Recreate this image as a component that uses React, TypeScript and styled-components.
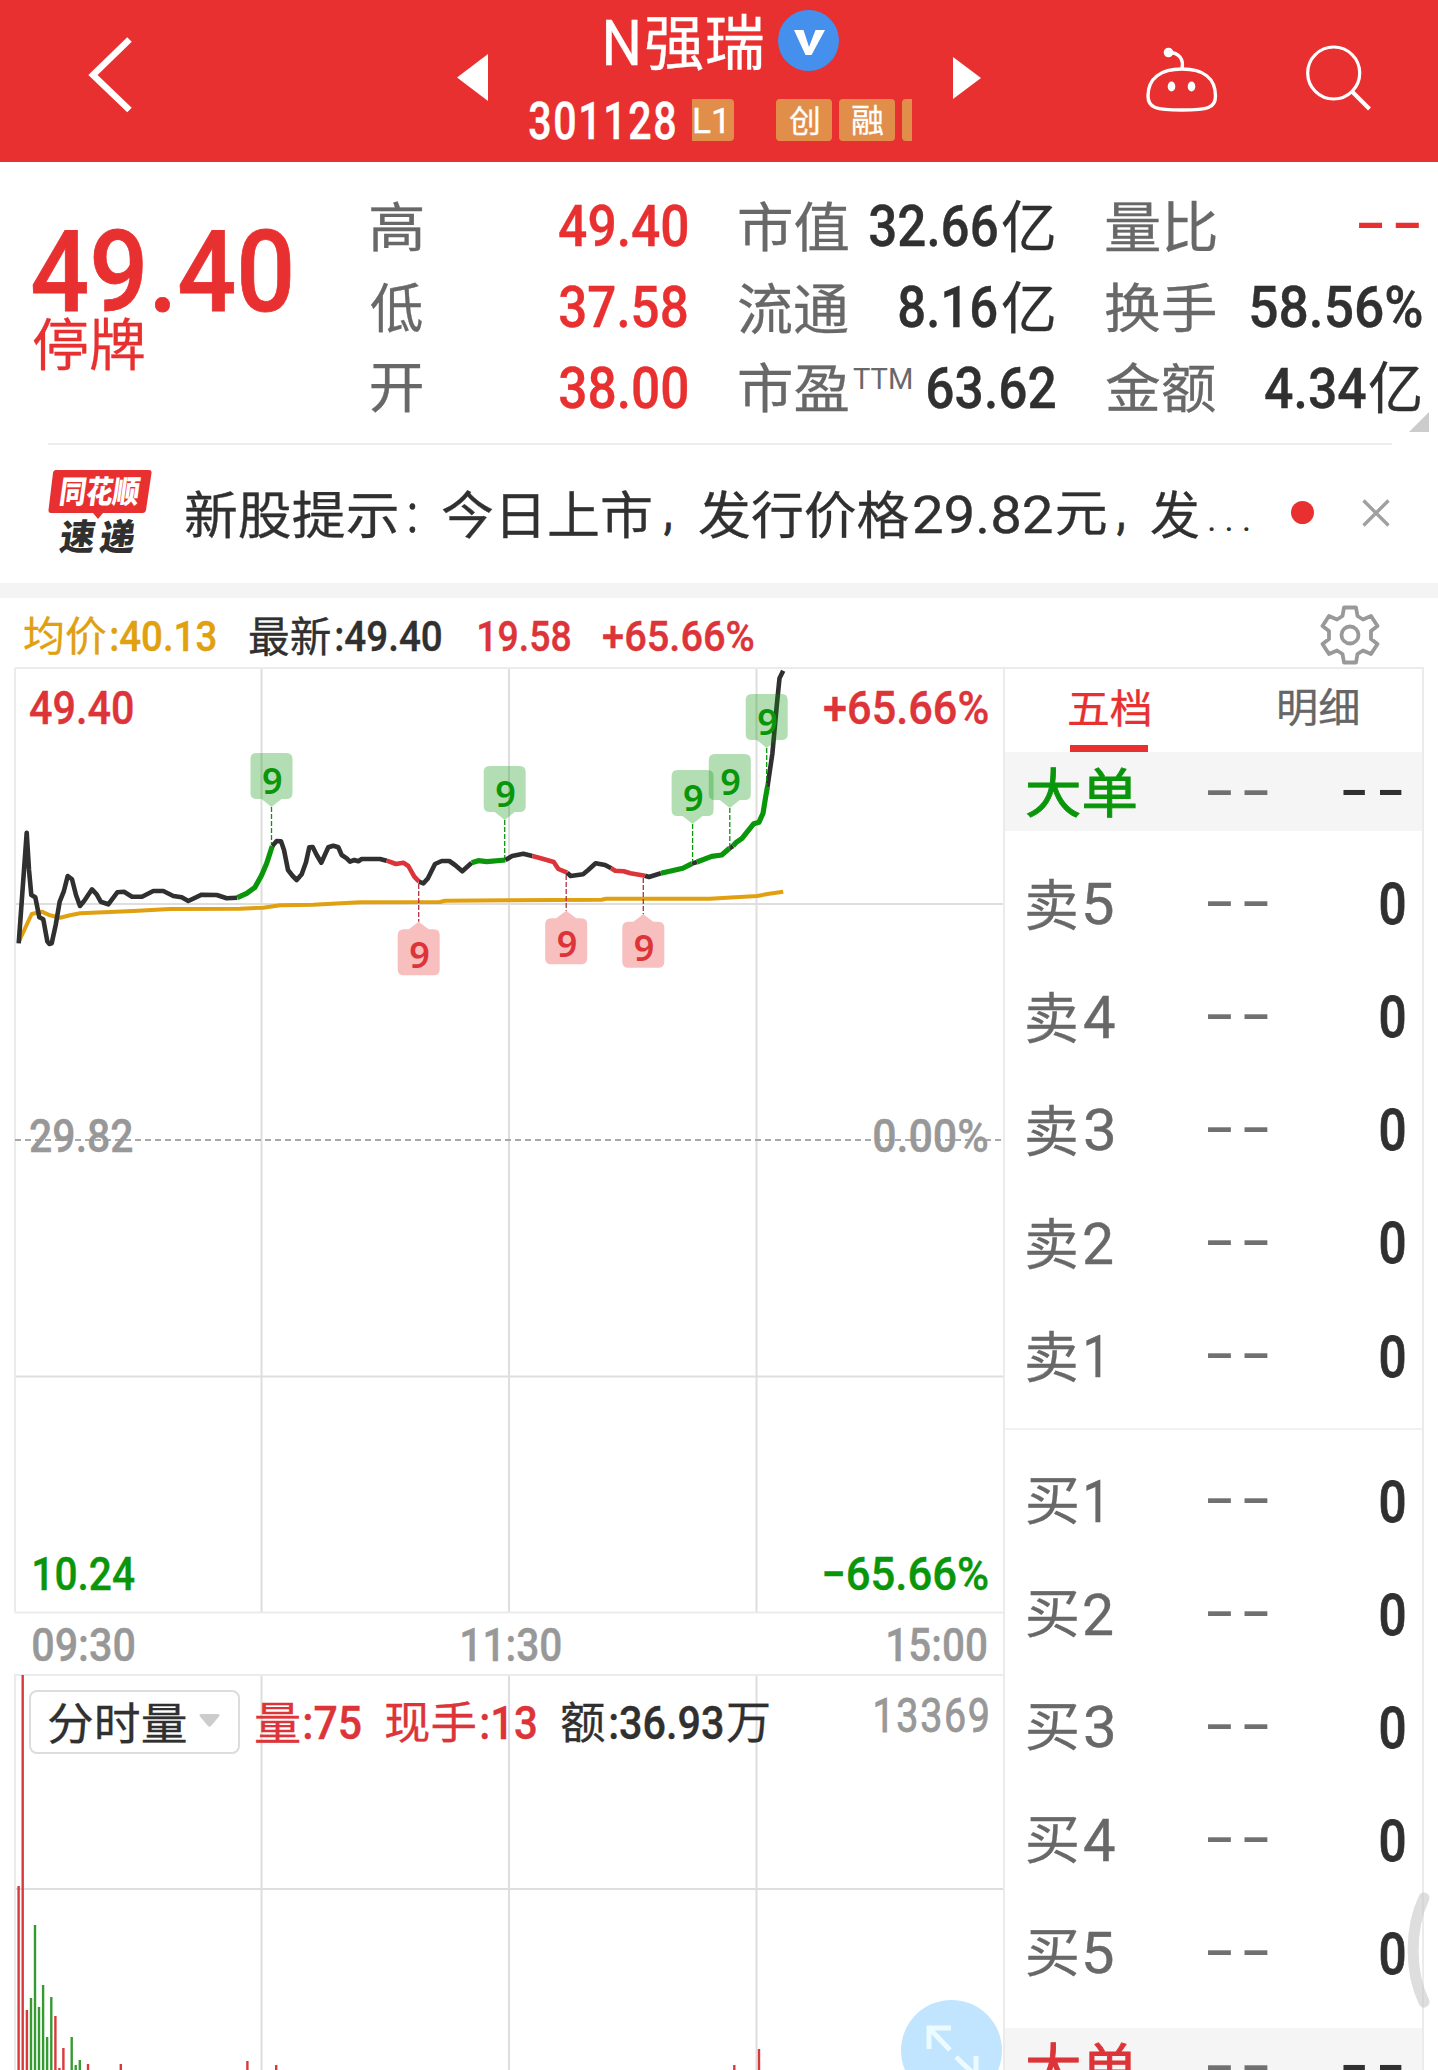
import React, { useMemo } from "react";
import styled, { createGlobalStyle } from "styled-components";

const FONT = 'Roboto, "Noto Sans CJK SC", sans-serif';
const RED = "#e83030";
const CHART_RED = "#dc3438";
const GREEN = "#0a960a";
const DARK = "#303030";
const GRAY = "#686868";
const MUTED = "#989898";
const GOLD = "#e0a010";

const GlobalStyle = createGlobalStyle`
  * { box-sizing: border-box; }
  body { margin: 0; background: #fff; font-family: ${FONT}; }
`;

/* ---------- Text whose glyphs fill an exact w x h box ---------- */

const InkBox = styled.span<{ $w: number; $h: number; $ml: number }>`
  display: block;
  flex: none;
  width: ${(p) => p.$w}px;
  height: ${(p) => p.$h}px;
  margin-left: ${(p) => p.$ml}px;
`;

const InkText = styled.span<{ $size: number; $weight: number; $color?: string; $ls: number; $stroke: number }>`
  display: block;
  width: max-content;
  white-space: pre;
  line-height: ${(p) => p.$size}px;
  font-family: ${FONT};
  font-size: ${(p) => p.$size}px;
  font-weight: ${(p) => p.$weight};
  letter-spacing: ${(p) => p.$ls}px;
  color: ${(p) => p.$color ?? "inherit"};
  -webkit-text-stroke: ${(p) => p.$stroke}px currentColor;
  transform-origin: 0 0;
`;

interface InkProps {
  children: string;
  w: number;
  h: number;
  weight?: number;
  color?: string;
  ls?: number;
  ml?: number;
  dy?: number;
  stroke?: number;
}

let measuring: CanvasRenderingContext2D | null = null;

function fit(text: string, size: number, weight: number, ls: number, w: number, h: number, dy: number) {
  measuring = measuring ?? document.createElement("canvas").getContext("2d")!;
  measuring.font = `${weight} ${size}px ${FONT}`;
  (measuring as unknown as { letterSpacing: string }).letterSpacing = `${ls}px`;
  const m = measuring.measureText(text);
  const sx = w / (m.actualBoundingBoxLeft + m.actualBoundingBoxRight);
  const sy = h / (m.actualBoundingBoxAscent + m.actualBoundingBoxDescent);
  const baseline = (size + Math.round(m.fontBoundingBoxAscent) - Math.round(m.fontBoundingBoxDescent)) / 2;
  const tx = m.actualBoundingBoxLeft * sx;
  const ty = (m.actualBoundingBoxAscent - baseline) * sy + dy;
  return `translate(${tx}px, ${ty}px) scale(${sx}, ${sy})`;
}

function Ink({ children, w, h, weight = 400, color, ls = 0, ml = 0, dy = 0, stroke }: InkProps) {
  const dashes = /^-+$/.test(children);
  const cjk = /[\u4e00-\u9fff]/.test(children);
  const size = dashes ? 58 : Math.round(h * (cjk ? 1.09 : 1.38));
  const spacing = dashes ? 6 : ls;
  const transform = useMemo(
    () => fit(children, size, weight, spacing, w, h, dy),
    [children, size, weight, spacing, w, h, dy]
  );
  return (
    <InkBox $w={w} $h={h} $ml={ml}>
      <InkText
        $size={size}
        $weight={weight}
        $color={color}
        $ls={spacing}
        $stroke={stroke ?? (cjk ? 0.3 : dashes ? 0 : 0.4)}
        style={{ transform }}
      >
        {children}
      </InkText>
    </InkBox>
  );
}

/* ---------- Page ---------- */

const Page = styled.div`
  width: 1438px;
  height: 2070px;
  overflow: hidden;
  background: #fff;
  display: flex;
  flex-direction: column;
  position: relative;
`;

/* ---------- Header ---------- */

const Header = styled.header`
  height: 162px;
  flex: none;
  background: ${RED};
  color: #fff;
  display: flex;
  align-items: flex-start;
`;

const HeaderIcon = styled.svg<{ $w: number; $h: number; $ml: number; $mt: number }>`
  flex: none;
  display: block;
  width: ${(p) => p.$w}px;
  height: ${(p) => p.$h}px;
  margin: ${(p) => p.$mt}px 0 0 ${(p) => p.$ml}px;
  overflow: visible;
`;

const Title = styled.div`
  width: 384px;
  height: 162px;
  margin-left: 41px;
  flex: none;
`;

const TitleRow = styled.div`
  display: flex;
  align-items: center;
  height: 65px;
  margin: 10px 0 0 77px;
`;

const VBadge = styled.svg`
  width: 61px;
  height: 61px;
  margin: -4px 0 0 15px;
  flex: none;
`;

const CodeRow = styled.div`
  display: flex;
  align-items: center;
  height: 42px;
  margin-top: 24px;
`;

const Tag = styled.span<{ $w: number; $ml: number; $radius: string; $pad?: number }>`
  display: flex;
  align-items: center;
  flex: none;
  width: ${(p) => p.$w}px;
  height: 42px;
  margin-left: ${(p) => p.$ml}px;
  padding-left: ${(p) => p.$pad ?? 0}px;
  border-radius: ${(p) => p.$radius};
  background: #e28e4b;
`;

/* ---------- Quote summary ---------- */

const Summary = styled.section`
  height: 282px;
  flex: none;
  display: flex;
  position: relative;
  padding-top: 24px;
`;

const PriceBlock = styled.div`
  width: 258px;
  margin: 42px 0 0 33px;
  display: flex;
  flex-direction: column;
  gap: 4px;
`;

const StatColumn = styled.dl<{ $w: number; $ml: number }>`
  margin: 0 0 0 ${(p) => p.$ml}px;
  width: ${(p) => p.$w}px;
  flex: none;
`;

const StatRow = styled.div`
  display: flex;
  align-items: center;
  justify-content: space-between;
  height: 80.7px;
`;

const StatLabel = styled.dt`
  display: flex;
  padding-top: 1.5px;
  color: ${GRAY};
`;

const StatValue = styled.dd<{ $color: string; $pr?: number }>`
  display: flex;
  align-items: center;
  margin: 0;
  padding-right: ${(p) => p.$pr ?? 0}px;
  color: ${(p) => p.$color};
`;

const Corner = styled.span`
  position: absolute;
  right: 9px;
  bottom: 12px;
  width: 20px;
  height: 20px;
  background: #ccc;
  clip-path: polygon(100% 0, 100% 100%, 0 100%);
`;

/* ---------- News strip ---------- */

const News = styled.section`
  height: 140px;
  flex: none;
  margin: -1px 46px 0 48px;
  padding-bottom: 4px;
  border-top: 2px solid #ededed;
  display: flex;
  align-items: center;
  color: ${DARK};
`;

const NewsLogo = styled.svg`
  width: 104px;
  height: 86px;
  flex: none;
  overflow: visible;
`;

const NewsText = styled.div`
  display: flex;
  align-items: center;
  margin: 5px 0 0 33.5px;
`;

const UnreadDot = styled.span`
  width: 23px;
  height: 23px;
  border-radius: 50%;
  background: ${RED};
  margin-left: 38.5px;
  flex: none;
`;

const CloseIcon = styled.svg`
  width: 28px;
  height: 28px;
  margin: 1px 0 0 48px;
  flex: none;
`;

const Band = styled.div`
  height: 15px;
  flex: none;
  background: #f4f4f4;
`;

/* ---------- Chart info line ---------- */

const InfoBar = styled.div`
  height: 69px;
  flex: none;
  display: flex;
  align-items: center;
  padding: 7px 58px 0 24px;
`;

const GearIcon = styled.svg`
  width: 60px;
  height: 60px;
  margin: -3px 0 0 auto;
  flex: none;
`;

/* ---------- Main area ---------- */

const Main = styled.main`
  display: flex;
  margin-left: 14px;
  height: 1403px;
  flex: none;
`;

const Charts = styled.section`
  width: 989px;
  height: 1403px;
  position: relative;
  flex: none;
`;

const PriceChart = styled.svg`
  display: block;
  width: 990px;
  height: 946px;
  overflow: visible;
`;

const AxisLabel = styled.div<{ $top: number; $left?: number; $right?: number }>`
  position: absolute;
  top: ${(p) => p.$top}px;
  ${(p) => (p.$left !== undefined ? `left: ${p.$left}px;` : `right: ${p.$right}px;`)}
`;

const TimeAxis = styled.div`
  height: 62px;
  display: flex;
  align-items: center;
  justify-content: space-between;
  padding: 2px 17px 0 19px;
  color: ${MUTED};
`;

const VolumeArea = styled.div`
  position: relative;
  height: 395px;
`;

const VolumeChart = styled.svg`
  display: block;
  width: 990px;
  height: 395px;
  overflow: visible;
`;

const VolumeHead = styled.div`
  position: absolute;
  left: 15px;
  top: 15px;
  right: 16px;
  height: 64px;
  display: flex;
  align-items: center;
`;

const IndicatorSelect = styled.div`
  width: 211px;
  height: 64px;
  flex: none;
  border: 2px solid #dcdcdc;
  border-radius: 8px;
  background: #fff;
  display: flex;
  align-items: center;
  padding: 3px 18px 0 17.5px;
  justify-content: space-between;
`;

const Caret = styled.svg`
  width: 21px;
  height: 13px;
  margin-top: -6px;
`;

const ExpandButton = styled.svg`
  position: absolute;
  left: 887px;
  top: 325px;
  width: 101px;
  height: 101px;
`;

/* ---------- Order book ---------- */

const OrderBook = styled.aside`
  width: 421px;
  flex: none;
  border: 2px solid #ebebeb;
  border-bottom: 0;
  height: 1403px;
  overflow: hidden;
`;

const Tabs = styled.div`
  display: flex;
  height: 83px;
`;

const Tab = styled.div<{ $active?: boolean; $w: number; $pl: number }>`
  width: ${(p) => p.$w}px;
  padding: 19.5px 0 0 ${(p) => p.$pl}px;
  color: ${(p) => (p.$active ? RED : "#666")};
  display: flex;
  flex-direction: column;
  justify-content: space-between;
`;

const Underline = styled.span`
  width: 78px;
  height: 7px;
  margin-left: 1px;
  background: ${RED};
`;

const BookRow = styled.div<{ $h: number; $bg?: string }>`
  height: ${(p) => p.$h}px;
  display: grid;
  grid-template-columns: 181px 135px 61px;
  align-items: center;
  padding-left: 22px;
  background: ${(p) => p.$bg ?? "transparent"};
  color: ${GRAY};
`;

const Level = styled.div`
  display: flex;
  align-items: center;
`;

const Qty = styled.div`
  display: flex;
  justify-content: flex-end;
  color: ${DARK};
`;

const Side = styled.div<{ $pt: number; $pb: number; $line?: boolean }>`
  padding: ${(p) => p.$pt}px 0 ${(p) => p.$pb}px;
  border-bottom: ${(p) => (p.$line ? "2px solid #f1f1f1" : "0")};
`;

const EdgeHandle = styled.svg`
  position: absolute;
  left: 1404px;
  top: 1890px;
  width: 28px;
  height: 120px;
`;

/* ---------- Data ---------- */

type Segment = { color: string; pts: string };

const PRICE: Segment[] = [
  {
    color: DARK,
    pts: "18.7,943.3 26.7,832.7 29,870 31.3,895 35.3,897.3 39.3,917.3 43.3,919.3 47.3,941.3 49.3,944 51.7,943.3 55.7,925 59.7,901.7 63.7,891.7 67.7,876 72,879.3 76,895 80,906 84.3,900.7 92,889.3 96.7,894.3 100.7,901.7 108.3,904.3 117.3,892.3 124,891.7 132,896.7 142,896.7 153.3,891 163.3,891 173.3,896 181.7,897.3 188.3,901 201.7,894.7 216.7,895 226.7,898.3 237.3,897.7",
  },
  { color: GREEN, pts: "237.3,897.7 246.7,893.3 255,887.3 261.7,875 266.7,863.3 272.3,846" },
  {
    color: DARK,
    pts: "272.3,846 276.7,841 281,841.3 284,850 288,870 292.7,876 296.7,880 301.7,874.3 306,862.3 309.3,847.3 312.7,847 316.7,855 321.3,862.7 328.3,847.3 333.3,845.7 338.3,847.3 341.7,855 346.7,858.3 350,861.7 354.3,860 358.3,861.3 361.7,859 380,859 386.7,860.7",
  },
  { color: CHART_RED, pts: "386.7,860.7 396,864 403.3,862.7 408.3,866 414.3,876.7 419,881.7" },
  {
    color: DARK,
    pts: "419,881.7 423.3,883.3 427.7,878.7 435,864 441.7,861 449.3,861 455,865 462.3,871.3 471.7,862.7",
  },
  { color: GREEN, pts: "471.7,862.7 478.3,860.7 486.8,861.7 505.4,860" },
  { color: DARK, pts: "505.4,860 512.1,856 523.3,853.7 532.4,856" },
  { color: CHART_RED, pts: "532.4,856 542.5,858.7 553.7,862 558.4,869 567.2,872.7" },
  { color: DARK, pts: "567.2,872.7 570.6,876 583.1,874.3 588.2,870 595.6,863.3 605.1,865 611.2,868.3" },
  { color: CHART_RED, pts: "611.2,868.3 615.2,870.7 623.7,871.3 630.4,873.3 645,875.7" },
  { color: DARK, pts: "645,875.7 649,877 660.9,873.3" },
  { color: GREEN, pts: "660.9,873.3 682.8,868.3 692,863.6" },
  { color: DARK, pts: "692,863.6 697,862" },
  { color: GREEN, pts: "697,862 711.6,856.3 721.7,855 729.5,848.3" },
  { color: DARK, pts: "729.5,848.3 733,846" },
  {
    color: GREEN,
    pts: "733,846 736.3,842.3 742,838.3 753.8,823.7 758.9,822.3 763,813.3 765.7,796.7 767.4,787.3",
  },
  { color: DARK, pts: "767.4,787.3 772.4,753.3 776.8,705 779.5,678.3 783.2,670.7" },
];

const AVERAGE =
  "18.7,942 31.7,914 41.7,911.7 50,915.3 60,917.7 70,915.3 80,913.3 133.3,911 170,909 240,908.7 263.3,907.7 280,905.3 313.3,904.7 360,902.3 440,902 445,900.7 510.4,900.3 601.7,899.7 606,898.7 710,898.7 726.8,897.7 757.2,896 767.4,894 783.2,891.7";

const UP_MARKS = [
  { x: 271.5, top: 753, end: 844 },
  { x: 504.7, top: 766, end: 859 },
  { x: 692.6, top: 770, end: 862 },
  { x: 729.8, top: 754, end: 848 },
  { x: 766.7, top: 694, end: 787 },
];

const DOWN_MARKS = [
  { x: 418.7, tip: 921.7, start: 884 },
  { x: 566.2, tip: 910.7, start: 875 },
  { x: 643.3, tip: 914.3, start: 878 },
];

const R = "#d8393c";
const G = "#359a30";
const VOLUME: [number, number, string][] = [
  [18.6, 1886, R], [22.7, 1675, R], [26.9, 2010, R], [31, 1998, G], [35, 1925, G], [39, 2007, G],
  [43.1, 1985, G], [47.1, 2037, G], [51.3, 1997, G], [55.4, 2016, R], [59.4, 2068, R], [63.4, 2048, R],
  [71.7, 2037, G], [75.7, 2065, G], [79.8, 2060, G], [88, 2064, R], [120.8, 2064, R], [247.4, 2061, R],
  [276.2, 2065, R], [734.3, 2065, R], [759, 2049, R],
];

const DIGIT_W: Record<string, number> = { "1": 14.5, "2": 28.5, "3": 28, "4": 31, "5": 28 };
const DIGIT_ML: Record<string, number> = { "1": 8.5, "2": 7, "3": 7.5, "4": 7, "5": 7.5 };

function Row({ side, n }: { side: string; n: string }) {
  return (
    <BookRow $h={113.07}>
      <Level>
        <Ink w={50} h={side === "卖" ? 52 : 48} dy={0.5}>{side}</Ink>
        <Ink w={DIGIT_W[n]} h={42} ml={DIGIT_ML[n]} stroke={0.4}>{n}</Ink>
      </Level>
      <Ink w={59.5} h={5.5} color="#707070">--</Ink>
      <Qty>
        <Ink w={23.5} h={42.5} weight={500} stroke={0.8}>0</Ink>
      </Qty>
    </BookRow>
  );
}

function BigOrder({ color }: { color: string }) {
  return (
    <BookRow $h={79} $bg="#f5f5f5">
      <Ink w={109} h={52} color={color} stroke={0.9} dy={0.5}>大单</Ink>
      <Ink w={59.5} h={5.5} color="#707070" dy={1}>--</Ink>
      <Ink w={59.5} h={5.5} color={DARK} weight={500} dy={1}>--</Ink>
    </BookRow>
  );
}

export default function App() {
  return (
    <Page>
      <GlobalStyle />

      <Header>
        <HeaderIcon $w={44} $h={78} $ml={88} $mt={36} viewBox="0 0 44 78">
          <path d="M41.5 3.5 L5 39 L41.5 74" fill="none" stroke="#fff" strokeWidth="6.5" />
        </HeaderIcon>
        <HeaderIcon $w={31} $h={47} $ml={325} $mt={54} viewBox="0 0 31 47">
          <path d="M31 0 V47 L0 23.5 Z" fill="#fff" />
        </HeaderIcon>
        <Title>
          <TitleRow>
            <Ink w={32} h={45} dy={0.5}>N</Ink>
            <Ink w={117} h={57} ml={8}>强瑞</Ink>
            <VBadge viewBox="0 0 61 61">
              <circle cx="30.5" cy="30.5" r="30.5" fill="#4590ec" />
              <path d="M16 20 H25.5 L31 37 L37.500 20 H47 L33.500 45 H27.500 Z" fill="#fff" />
            </VBadge>
          </TitleRow>
          <CodeRow>
            <Ink w={146} h={35.5} weight={500} ls={2} dy={1} stroke={0.5}>301128</Ink>
            <Tag $w={42} $ml={17} $radius="0 4px 4px 0" $pad={2}>
              <Ink w={30} h={25}>L1</Ink>
            </Tag>
            <Tag $w={56} $ml={42} $radius="4px" $pad={13}>
              <Ink w={30} h={31}>创</Ink>
            </Tag>
            <Tag $w={56} $ml={7} $radius="4px" $pad={13}>
              <Ink w={31} h={31}>融</Ink>
            </Tag>
            <Tag $w={10} $ml={7} $radius="4px 0 0 4px" />
          </CodeRow>
        </Title>
        <HeaderIcon $w={28} $h={42} $ml={40} $mt={57} viewBox="0 0 28 42">
          <path d="M0 0 L28 21 L0 42 Z" fill="#fff" />
        </HeaderIcon>
        <HeaderIcon $w={72} $h={65} $ml={165} $mt={47} viewBox="0 0 72 65" fill="none" stroke="#fff" strokeWidth="3.400">
          <path d="M36 22 C57 22 69.500 31 69.500 49 C69.500 61 62 63 36 63 C10 63 2 61 2 49 C2 31 15 22 36 22 Z" />
          <path d="M36 22 C38 12 33 5.500 23 5.500" />
          <circle cx="22.500" cy="5.500" r="4.800" fill="#fff" stroke="none" />
          <ellipse cx="25.500" cy="39.500" rx="3.800" ry="5" fill="#fff" stroke="none" />
          <ellipse cx="45.500" cy="39.500" rx="3.800" ry="5" fill="#fff" stroke="none" />
        </HeaderIcon>
        <HeaderIcon $w={66} $h={66} $ml={88} $mt={45} viewBox="0 0 66 66" fill="none" stroke="#fff" strokeWidth="3.200">
          <circle cx="27.700" cy="28" r="26" />
          <path d="M46 46.500 L63.500 64" strokeWidth="4" />
        </HeaderIcon>
      </Header>

      <Summary>
        <PriceBlock>
          <Ink w={257} h={84} weight={500} color={RED} stroke={0.8}>49.40</Ink>
          <Ink w={111} h={54} color={RED} dy={1}>停牌</Ink>
        </PriceBlock>
        <StatColumn $w={316} $ml={80}>
          <StatRow>
            <StatLabel><Ink w={51.5} h={52}>高</Ink></StatLabel>
            <StatValue $color={RED}><Ink w={128} h={42} weight={500}>49.40</Ink></StatValue>
          </StatRow>
          <StatRow>
            <StatLabel><Ink w={51.5} h={52}>低</Ink></StatLabel>
            <StatValue $color={RED}><Ink w={127} h={42} weight={500}>37.58</Ink></StatValue>
          </StatRow>
          <StatRow>
            <StatLabel><Ink w={51.5} h={48} dy={1}>开</Ink></StatLabel>
            <StatValue $color={RED}><Ink w={127} h={42} weight={500}>38.00</Ink></StatValue>
          </StatRow>
        </StatColumn>
        <StatColumn $w={315.5} $ml={52}>
          <StatRow>
            <StatLabel><Ink w={109} h={52}>市值</Ink></StatLabel>
            <StatValue $color={DARK} $pr={1}>
              <Ink w={127} h={42} weight={500}>32.66</Ink>
              <Ink w={52} h={53} ml={5} dy={-1}>亿</Ink>
            </StatValue>
          </StatRow>
          <StatRow>
            <StatLabel><Ink w={109} h={52}>流通</Ink></StatLabel>
            <StatValue $color={DARK} $pr={1}>
              <Ink w={97.500} h={42} weight={500}>8.16</Ink>
              <Ink w={52} h={53} ml={5} dy={-1.5}>亿</Ink>
            </StatValue>
          </StatRow>
          <StatRow>
            <StatLabel>
              <Ink w={109} h={52}>市盈</Ink>
              <Ink w={58} h={21} ml={4.5} dy={6} stroke={0}>TTM</Ink>
            </StatLabel>
            <StatValue $color={DARK}><Ink w={127} h={42} weight={500}>63.62</Ink></StatValue>
          </StatRow>
        </StatColumn>
        <StatColumn $w={316} $ml={51}>
          <StatRow>
            <StatLabel><Ink w={109.5} h={50.500}>量比</Ink></StatLabel>
            <StatValue $color={RED} $pr={3}><Ink w={60} h={6}>--</Ink></StatValue>
          </StatRow>
          <StatRow>
            <StatLabel><Ink w={109.5} h={52}>换手</Ink></StatLabel>
            <StatValue $color={DARK}><Ink w={171} h={42} weight={500}>58.56%</Ink></StatValue>
          </StatRow>
          <StatRow>
            <StatLabel><Ink w={109.5} h={52}>金额</Ink></StatLabel>
            <StatValue $color={DARK} $pr={1}>
              <Ink w={100.500} h={41.500} weight={500}>4.34</Ink>
              <Ink w={51.500} h={53} ml={4} dy={-1.5}>亿</Ink>
            </StatValue>
          </StatRow>
        </StatColumn>
        <Corner />
      </Summary>

      <News>
        <NewsLogo viewBox="0 0 104 86">
          <path d="M8 1 H101 Q104 1 103.500 4 L98 41 Q97.500 44 94.500 44 H55 L50 50 L45 44 H3 Q0 44 0.500 41 L5 4 Q5.500 1 8 1 Z" fill={RED} />
          <g fontFamily='"Noto Sans CJK SC", sans-serif' fontWeight="900" transform="skewX(-8)">
            <text transform="translate(15 34) scale(1 1.12)" fontSize="28" textLength="80" lengthAdjust="spacingAndGlyphs" fill="#fff">同花顺</text>
            <text x="22" y="81" fontSize="36" textLength="35" lengthAdjust="spacingAndGlyphs" fill={DARK}>速</text>
            <text x="62" y="81" fontSize="36" textLength="35" lengthAdjust="spacingAndGlyphs" fill={DARK}>递</text>
          </g>
        </NewsLogo>
        <NewsText>
          <Ink w={210.5} h={49}>新股提示</Ink>
          <Ink w={7} h={29} ml={13} dy={4}>:</Ink>
          <Ink w={209} h={49} ml={26}>今日上市</Ink>
          <Ink w={8} h={15} ml={13} dy={18}>,</Ink>
          <Ink w={209.5} h={49} ml={26.500}>发行价格</Ink>
          <Ink w={137.5} h={39.500} ml={6}>29.82</Ink>
          <Ink w={48.500} h={44} ml={5}>元</Ink>
          <Ink w={8} h={15} ml={12} dy={18}>,</Ink>
          <Ink w={48} h={49} ml={26}>发</Ink>
          <Ink w={45} h={5} ml={8} dy={16} stroke={0} ls={1.5}>...</Ink>
        </NewsText>
        <UnreadDot />
        <CloseIcon viewBox="0 0 28 28">
          <path d="M1.500 1.500 L26.500 26.500 M26.500 1.500 L1.500 26.500" stroke="#a0a0a0" strokeWidth="3.400" />
        </CloseIcon>
      </News>
      <Band />

      <InfoBar>
        <Ink w={82} h={40.500} color={GOLD} dy={-1}>均价</Ink>
        <Ink w={104.500} h={30.500} weight={500} color={GOLD} ml={5}>:40.13</Ink>
        <Ink w={80.500} h={40.500} color={DARK} ml={34.500} dy={-1}>最新</Ink>
        <Ink w={105} h={30.500} weight={500} color={DARK} ml={5}>:49.40</Ink>
        <Ink w={91} h={30.500} weight={500} color={CHART_RED} ml={38}>19.58</Ink>
        <Ink w={151} h={30.500} weight={500} color={CHART_RED} ml={33}>+65.66%</Ink>
        <GearIcon viewBox="-30 -30 60 60" fill="none" stroke="#999" strokeWidth="3.800" strokeLinejoin="round">
          <path d="M-6 -27.500 H6 L7.500 -19 L13 -15.500 L21 -19 L27.500 -9 L21 -4 V4 L27.500 9 L21 19 L13 15.500 L7.500 19 L6 27.500 H-6 L-7.500 19 L-13 15.500 L-21 19 L-27.500 9 L-21 4 V-4 L-27.500 -9 L-21 -19 L-13 -15.500 L-7.500 -19 Z" />
          <circle r="8.500" />
        </GearIcon>
      </InfoBar>

      <Main>
        <Charts>
          <PriceChart viewBox="14 667 990 946">
            <g stroke="#dedede" strokeWidth="2">
              <path d="M261.500 668 V1612 M509 668 V1612 M756.500 668 V1612 M15 904 H1003 M15 1376.500 H1003" />
            </g>
            <path d="M15 668 H1003 M15 1612.500 H1003 M15 668 V1612.500" stroke="#ebebeb" strokeWidth="2" fill="none" />
            <path d="M15 1140 H1003" stroke="#a8a8a8" strokeWidth="2" strokeDasharray="6 4" />
            <polyline points={AVERAGE} fill="none" stroke={GOLD} strokeWidth="4" strokeLinejoin="round" />
            {PRICE.map((s, i) => (
              <polyline key={i} points={s.pts} fill="none" stroke={s.color} strokeWidth={s.color === GREEN ? 5.200 : 4.600} strokeLinejoin="round" />
            ))}
            {UP_MARKS.map(({ x, top, end }) => (
              <g key={x}>
                <path d={`M${x} ${top + 54} V${end}`} stroke={GREEN} strokeWidth="1.300" strokeDasharray="5 2" />
                <path
                  d={`M${x - 15} ${top} h30 q6 0 6 6 v34 q0 6 -6 6 h-5 l-10 8 l-10 -8 h-5 q-6 0 -6 -6 v-34 q0 -6 6 -6 Z`}
                  fill={GREEN}
                  fillOpacity="0.31"
                />
                <text x={x + 0.800} y={top + 40.500} textAnchor="middle" fontFamily='"Noto Sans", sans-serif' fontSize="36" fontWeight="600" fill={GREEN}>9</text>
              </g>
            ))}
            {DOWN_MARKS.map(({ x, tip, start }) => (
              <g key={x}>
                <path d={`M${x} ${start} V${tip}`} stroke="#b03040" strokeWidth="1.300" strokeDasharray="5 2" />
                <path
                  d={`M${x} ${tip} l10 7.500 h5 q6 0 6 6 v34 q0 6 -6 6 h-30 q-6 0 -6 -6 v-34 q0 -6 6 -6 h5 Z`}
                  fill={RED}
                  fillOpacity="0.31"
                />
                <text x={x + 0.800} y={tip + 46.500} textAnchor="middle" fontFamily='"Noto Sans", sans-serif' fontSize="36" fontWeight="600" fill={CHART_RED}>9</text>
              </g>
            ))}
          </PriceChart>

          <AxisLabel $top={23} $left={16}><Ink w={102.500} h={33.500} weight={500} color={CHART_RED}>49.40</Ink></AxisLabel>
          <AxisLabel $top={23} $right={16}><Ink w={163.500} h={33.500} weight={500} color={CHART_RED}>+65.66%</Ink></AxisLabel>
          <AxisLabel $top={452} $left={16}><Ink w={102.500} h={33.500} weight={500} color={MUTED}>29.82</Ink></AxisLabel>
          <AxisLabel $top={452} $right={16}><Ink w={113} h={33.500} weight={500} color={MUTED}>0.00%</Ink></AxisLabel>
          <AxisLabel $top={890} $left={20}><Ink w={100} h={33.500} weight={500} color={GREEN}>10.24</Ink></AxisLabel>
          <AxisLabel $top={890} $right={16}><Ink w={163.500} h={33.500} weight={500} color={GREEN}>−65.66%</Ink></AxisLabel>

          <TimeAxis>
            <Ink w={101} h={33.500} weight={500}>09:30</Ink>
            <Ink w={98.500} h={33.500} weight={500}>11:30</Ink>
            <Ink w={98} h={33.500} weight={500}>15:00</Ink>
          </TimeAxis>

          <VolumeArea>
            <VolumeChart viewBox="14 1675 990 395">
              <path d="M261.500 1675 V2070 M509 1675 V2070 M756.500 1675 V2070 M15 1889 H1003" stroke="#dedede" strokeWidth="2" />
              <path d="M15 2070 V1675 H1003" stroke="#ebebeb" strokeWidth="2" fill="none" />
              {VOLUME.map(([x, top, color]) => (
                <path key={x} d={`M${x} ${top} V2070`} stroke={color} strokeWidth="2.400" />
              ))}
            </VolumeChart>
            <VolumeHead>
              <IndicatorSelect>
                <Ink w={136.500} h={43} color={DARK}>分时量</Ink>
                <Caret viewBox="0 0 21 13"><path d="M2 0 H19 Q21.500 0.500 20 2.500 L12 12 Q10.500 13.500 9 12 L1 2.500 Q-0.500 0.500 2 0 Z" fill="#ccc" /></Caret>
              </IndicatorSelect>
              <Ink w={43} h={41} color={CHART_RED} ml={16}>量</Ink>
              <Ink w={57} h={33.500} weight={500} color={CHART_RED} ml={5} dy={1}>:75</Ink>
              <Ink w={89} h={43} color={CHART_RED} ml={25}>现手</Ink>
              <Ink w={55} h={33.500} weight={500} color={CHART_RED} ml={6} dy={1}>:13</Ink>
              <Ink w={43.500} h={43} color={DARK} ml={25}>额</Ink>
              <Ink w={112.500} h={33.500} weight={500} color={DARK} ml={5.500} dy={1}>:36.93</Ink>
              <Ink w={42} h={40} color={DARK} ml={4} dy={1}>万</Ink>
              <Ink w={113} h={34} color={MUTED} ml={106} dy={-6.500} ls={2} stroke={0.9}>13369</Ink>
            </VolumeHead>
            <ExpandButton viewBox="0 0 101 101">
              <circle cx="50.500" cy="50.500" r="50.500" fill="#c1e4ff" />
              <path d="M50 28 H28 V49 M28 28 L49 50 M55 57 L75 76 M75 56 V76 H54" stroke="#ecfbff" strokeWidth="5" fill="none" />
            </ExpandButton>
          </VolumeArea>
        </Charts>

        <OrderBook>
          <Tabs>
            <Tab $active $w={208} $pl={63.500}>
              <Ink w={80.500} h={38}>五档</Ink>
              <Underline />
            </Tab>
            <Tab $w={208} $pl={65.500}>
              <Ink w={79.500} h={38.500}>明细</Ink>
            </Tab>
          </Tabs>
          <BigOrder color={GREEN} />
          <Side $pt={16} $pb={16} $line>
            {["5", "4", "3", "2", "1"].map((n) => <Row key={n} side="卖" n={n} />)}
          </Side>
          <Side $pt={14} $pb={18}>
            {["1", "2", "3", "4", "5"].map((n) => <Row key={n} side="买" n={n} />)}
          </Side>
          <BigOrder color={CHART_RED} />
        </OrderBook>
      </Main>

      <EdgeHandle viewBox="0 0 28 120">
        <path d="M20 8 C5.500 38 5.500 82 20 112" stroke="#c8c8c8" strokeOpacity="0.600" strokeWidth="11" strokeLinecap="round" fill="none" />
      </EdgeHandle>
    </Page>
  );
}
